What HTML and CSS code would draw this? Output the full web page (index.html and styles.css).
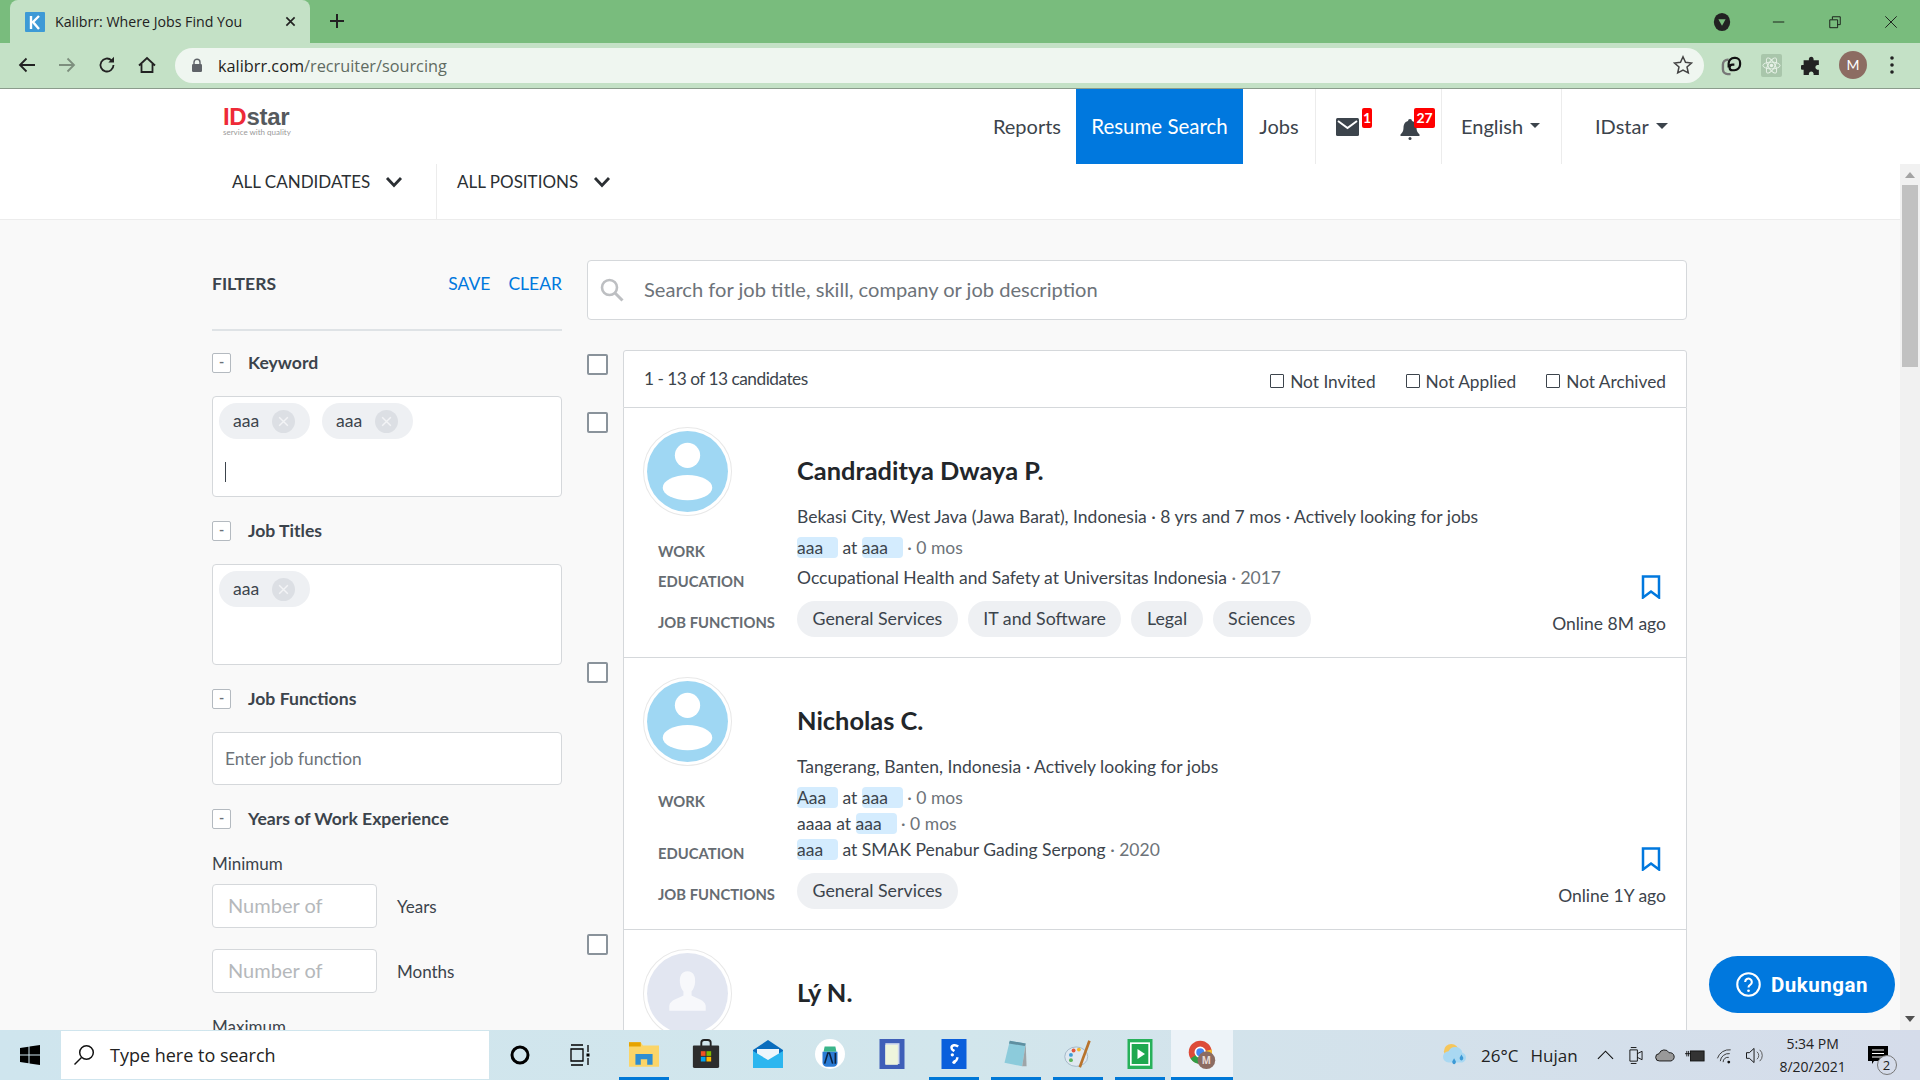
FILE: index.html
```html
<!DOCTYPE html>
<html>
<head>
<meta charset="utf-8">
<title>Kalibrr: Where Jobs Find You</title>
<link rel="stylesheet" href="styles.css">
</head>
<body>
  <!-- browser frame -->
  <div class="tabstrip">
    <div class="tab">
      <svg class="favicon" viewBox="0 0 20 20"><rect width="20" height="20" rx="1" fill="#3d9ad6"/><path d="M6 4v13M14 4l-6 6 6 7" stroke="#fff" stroke-width="2.4" fill="none"/></svg>
      <span class="tab-title">Kalibrr: Where Jobs Find You</span>
      <svg class="tab-close" viewBox="0 0 12 12"><path d="M1.5 1.5l9 9M10.5 1.5l-9 9" stroke="#222" stroke-width="1.8"/></svg>
    </div>
    <svg class="new-tab" viewBox="0 0 16 16"><path d="M8 1v14M1 8h14" stroke="#222" stroke-width="2"/></svg>
    <div class="window-controls">
      <svg class="profile-dot" viewBox="0 0 18 22"><ellipse cx="9" cy="11" rx="9" ry="10" fill="#222"/><path d="M5 8h8l-4 7z" fill="#79bc7d"/></svg>
      <svg class="win-btn" viewBox="0 0 16 16"><path d="M1 8h13" stroke="#111"/></svg>
      <svg class="win-btn" viewBox="0 0 16 16"><path d="M2 5.500h9v9H2zM5 5V2h9v9h-3" stroke="#111" fill="none"/></svg>
      <svg class="win-btn" viewBox="0 0 16 16"><path d="M1.500 1.500l13 13M14.500 1.500l-13 13" stroke="#111"/></svg>
    </div>
  </div>
  <div class="toolbar">
    <svg class="tool-icon" viewBox="0 0 20 20"><path d="M18 10H3M9.500 3.500L3 10l6.500 6.500" stroke="#222" stroke-width="1.8" fill="none"/></svg>
    <svg class="tool-icon" viewBox="0 0 20 20"><path d="M2 10h15M10.500 3.500L17 10l-6.500 6.500" stroke="#7d8f7e" stroke-width="1.8" fill="none"/></svg>
    <svg class="tool-icon" viewBox="0 0 20 20"><path d="M16.500 10a6.500 6.500 0 1 1-2-4.700" stroke="#222" stroke-width="1.8" fill="none"/><path d="M17 1.800V7.500h-5.700z" fill="#222"/></svg>
    <svg class="tool-icon" viewBox="0 0 20 20"><path d="M2 10.500L10 3l8 7.500M4.500 9v8h11V9" stroke="#222" stroke-width="1.8" fill="none"/></svg>
    <div class="omnibox">
      <svg class="lock" viewBox="0 0 12 14"><path d="M3 6V4.200a3 3 0 0 1 6 0V6" stroke="#5f6368" stroke-width="1.4" fill="none"/><rect x="1" y="6" width="10" height="8" rx="1.2" fill="#5f6368"/></svg>
      <span class="url">kalibrr.com<span class="url-path">/recruiter/sourcing</span></span>
      <svg class="star" viewBox="0 0 20 20"><path d="M10 1.800l2.500 5.500 6 .7-4.500 4 1.300 5.900L10 15l-5.300 2.900L6 12 1.500 8l6-.7z" stroke="#444" stroke-width="1.5" fill="none"/></svg>
    </div>
    <div class="extensions">
      <svg class="ext" viewBox="0 0 22 24"><path d="M8 6H7a5 5 0 0 0-5 5v5a5 5 0 0 0 5 5h3" stroke="#777" stroke-width="2.5" fill="none"/><path d="M8 14v-4a6 6 0 0 1 6-6h1a5 5 0 0 1 5 5v2a6 6 0 0 1-6 6h-2a3 3 0 0 1-3-3 3 3 0 0 1 3-3h2" stroke="#111" stroke-width="2.3" fill="none"/></svg>
      <svg class="ext" viewBox="0 0 22 24"><rect width="22" height="24" rx="2" fill="#a9c6ab"/><g stroke="#e8f2e8" fill="none"><ellipse cx="11" cy="12" rx="9" ry="3.5"/><ellipse cx="11" cy="12" rx="9" ry="3.5" transform="rotate(60 11 12)"/><ellipse cx="11" cy="12" rx="9" ry="3.5" transform="rotate(120 11 12)"/></g><circle cx="11" cy="12" r="1.8" fill="#e8f2e8"/></svg>
      <svg class="ext" viewBox="0 0 20 20"><path d="M7.500 3.500a2.300 2.300 0 0 1 4.500 0V5h5v4.500h-1.500a2.300 2.300 0 0 0 0 4.500H17v5h-5v-1.500a2.300 2.300 0 0 0-4.500 0V19h-5v-5H1a2.300 2.300 0 0 1 0-4.500h1.500V5h5z" fill="#222"/></svg>
      <div class="avatar-m">M</div>
      <svg class="dots" viewBox="0 0 6 20"><circle cx="3" cy="3" r="1.8" fill="#222"/><circle cx="3" cy="10" r="1.8" fill="#222"/><circle cx="3" cy="17" r="1.8" fill="#222"/></svg>
    </div>
  </div>

  <div class="viewport">
    <div class="page">
      <div class="header">
        <div class="nav-row">
          <div class="logo">
            <div class="logo-word"><span class="logo-id">ID</span>star</div>
            <div class="logo-sub">service with quality</div>
          </div>
          <div class="nav">
            <a class="nav-link">Reports</a>
            <a class="nav-link active">Resume Search</a>
            <a class="nav-link jobs">Jobs</a>
            <div class="nav-alerts">
              <div class="alert">
                <svg class="mail-icon" viewBox="0 0 23 18"><rect width="23" height="18" rx="1.5" fill="#3c444c"/><path d="M2 3l9.500 7L21 3" stroke="#fff" stroke-width="2" fill="none"/></svg>
                <span class="badge badge-mail">1</span>
              </div>
              <div class="alert alert-bell">
                <svg class="bell-icon" viewBox="0 0 20 22"><path d="M10 1a2 2 0 0 1 2 2c3.500 1 4.500 4 4.500 7 0 3.500 1.500 5 3 6.500V18H.5v-1.500c1.500-1.500 3-3 3-6.500 0-3 1-6 4.500-7a2 2 0 0 1 2-2z" fill="#3c444c"/><circle cx="10" cy="20.500" r="1.500" fill="#3c444c"/></svg>
                <span class="badge badge-bell">27</span>
              </div>
            </div>
            <a class="nav-link lang">English<i class="caret"></i></a>
            <a class="nav-link company">IDstar<i class="caret caret-lg"></i></a>
          </div>
        </div>
        <div class="sub-nav">
          <div class="sub-item first">ALL CANDIDATES <svg class="chev" viewBox="0 0 18 12"><path d="M2 2l7 7.500L16 2" stroke="#2b2f33" stroke-width="2.8" fill="none"/></svg></div>
          <div class="sub-item second">ALL POSITIONS <svg class="chev" viewBox="0 0 18 12"><path d="M2 2l7 7.500L16 2" stroke="#2b2f33" stroke-width="2.8" fill="none"/></svg></div>
        </div>
      </div>

      <div class="main">
        <div class="filters">
          <div class="filters-head">
            <span class="filters-title">FILTERS</span>
            <a class="filters-link save">SAVE</a>
            <a class="filters-link">CLEAR</a>
          </div>

          <div class="filter-head"><span class="toggle">-</span>Keyword</div>
          <div class="tag-box">
            <div class="tags">
              <span class="chip">aaa<svg class="chip-x" viewBox="0 0 24 24"><circle cx="12" cy="12" r="12" fill="#dcdfe4"/><path d="M7.500 7.500l9 9M16.500 7.500l-9 9" stroke="#f3f4f6" stroke-width="1.5"/></svg></span>
              <span class="chip">aaa<svg class="chip-x" viewBox="0 0 24 24"><circle cx="12" cy="12" r="12" fill="#dcdfe4"/><path d="M7.500 7.500l9 9M16.500 7.500l-9 9" stroke="#f3f4f6" stroke-width="1.5"/></svg></span>
            </div>
            <div class="text-caret"></div>
          </div>

          <div class="filter-head"><span class="toggle">-</span>Job Titles</div>
          <div class="tag-box">
            <div class="tags">
              <span class="chip">aaa<svg class="chip-x" viewBox="0 0 24 24"><circle cx="12" cy="12" r="12" fill="#dcdfe4"/><path d="M7.500 7.500l9 9M16.500 7.500l-9 9" stroke="#f3f4f6" stroke-width="1.5"/></svg></span>
            </div>
          </div>

          <div class="filter-head"><span class="toggle">-</span>Job Functions</div>
          <input class="text-input" type="text" placeholder="Enter job function">

          <div class="filter-head head-years"><span class="toggle">-</span>Years of Work Experience</div>
          <div class="range-label">Minimum</div>
          <div class="range-row"><input class="num-input" type="text" placeholder="Number of"><span>Years</span></div>
          <div class="range-row"><input class="num-input" type="text" placeholder="Number of"><span>Months</span></div>
          <div class="range-label label-max">Maximum</div>
        </div>

        <div class="results">
          <div class="search-box">
            <svg class="search-icon" viewBox="0 0 24 24"><circle cx="9.500" cy="9.500" r="7.500" stroke="#bdbfc2" stroke-width="2.6" fill="none"/><path d="M15 15l7.500 7.500" stroke="#bdbfc2" stroke-width="3"/></svg>
            <input class="search-input" type="text" placeholder="Search for job title, skill, company or job description">
          </div>

          <div class="row">
            <div class="row-check"><span class="check"></span></div>
            <div class="list-head">
              <span class="count">1 - 13 of 13 candidates</span>
              <label class="flag"><span class="flag-box"></span>Not Invited</label>
              <label class="flag"><span class="flag-box"></span>Not Applied</label>
              <label class="flag"><span class="flag-box"></span>Not Archived</label>
            </div>
          </div>

          <div class="row">
            <div class="row-check"><span class="check"></span></div>
            <div class="card">
              <div class="card-top">
                <svg class="avatar" viewBox="0 0 88 88"><circle cx="44" cy="44" r="43.5" fill="#fff" stroke="#e8e8e8"/><circle cx="44" cy="44" r="40" fill="#9fd7f3"/><circle cx="44" cy="28" r="12.5" fill="#fff"/><ellipse cx="44" cy="60" rx="24.5" ry="12.5" fill="#fff"/></svg>
                <div class="card-title">
                  <div class="name">Candraditya Dwaya P.</div>
                  <div class="location">Bekasi City, West Java (Jawa Barat), Indonesia · 8 yrs and 7 mos · Actively looking for jobs</div>
                </div>
              </div>
              <div class="card-body">
                <div class="info">
                  <div class="info-row single">
                    <div class="info-label">WORK</div>
                    <div class="info-value"><mark>aaa</mark> at <mark>aaa</mark> <span class="muted">· 0 mos</span></div>
                  </div>
                  <div class="info-row">
                    <div class="info-label">EDUCATION</div>
                    <div class="info-value">Occupational Health and Safety at Universitas Indonesia <span class="muted">· 2017</span></div>
                  </div>
                  <div class="info-row pills-row">
                    <div class="info-label">JOB FUNCTIONS</div>
                    <div class="pills"><span class="pill">General Services</span><span class="pill">IT and Software</span><span class="pill">Legal</span><span class="pill">Sciences</span></div>
                  </div>
                </div>
                <div class="card-aside">
                  <svg class="bookmark" viewBox="0 0 20 24"><path d="M2 1.500h16v21l-8-6-8 6z" stroke="#0078de" stroke-width="2.5" fill="none"/></svg>
                  <div class="online">Online 8M ago</div>
                </div>
              </div>
            </div>
          </div>

          <div class="row">
            <div class="row-check"><span class="check"></span></div>
            <div class="card">
              <div class="card-top">
                <svg class="avatar" viewBox="0 0 88 88"><circle cx="44" cy="44" r="43.5" fill="#fff" stroke="#e8e8e8"/><circle cx="44" cy="44" r="40" fill="#9fd7f3"/><circle cx="44" cy="28" r="12.5" fill="#fff"/><ellipse cx="44" cy="60" rx="24.5" ry="12.5" fill="#fff"/></svg>
                <div class="card-title">
                  <div class="name">Nicholas C.</div>
                  <div class="location">Tangerang, Banten, Indonesia · Actively looking for jobs</div>
                </div>
              </div>
              <div class="card-body">
                <div class="info">
                  <div class="info-row">
                    <div class="info-label">WORK</div>
                    <div class="info-value"><mark>Aaa</mark> at <mark>aaa</mark> <span class="muted">· 0 mos</span><br>aaaa at <mark>aaa</mark> <span class="muted">· 0 mos</span></div>
                  </div>
                  <div class="info-row">
                    <div class="info-label">EDUCATION</div>
                    <div class="info-value"><mark>aaa</mark> at SMAK Penabur Gading Serpong <span class="muted">· 2020</span></div>
                  </div>
                  <div class="info-row pills-row">
                    <div class="info-label">JOB FUNCTIONS</div>
                    <div class="pills"><span class="pill">General Services</span></div>
                  </div>
                </div>
                <div class="card-aside">
                  <svg class="bookmark" viewBox="0 0 20 24"><path d="M2 1.500h16v21l-8-6-8 6z" stroke="#0078de" stroke-width="2.5" fill="none"/></svg>
                  <div class="online">Online 1Y ago</div>
                </div>
              </div>
            </div>
          </div>

          <div class="row">
            <div class="row-check"><span class="check"></span></div>
            <div class="card">
              <div class="card-top">
                <svg class="avatar" viewBox="0 0 88 88"><circle cx="44" cy="44" r="43.5" fill="#fff" stroke="#e8e8e8"/><circle cx="44" cy="44" r="40" fill="#e2e6f1"/><path d="M44 22c6 0 8 5 7.500 11-.3 4-2 7-3.500 9v4c5 3 13 4 14 10v5H26v-5c1-6 9-7 14-10v-4c-1.500-2-3.200-5-3.500-9C36 27 38 22 44 22z" fill="#f7f8fb"/></svg>
                <div class="card-title">
                  <div class="name">Lý N.</div>
                </div>
              </div>
            </div>
          </div>
        </div>
      </div>

      <div class="support">
        <svg class="support-icon" viewBox="0 0 24 24"><circle cx="12" cy="12" r="10.8" stroke="#fff" stroke-width="2" fill="none"/><path d="M8.800 9.500a3.200 3.200 0 1 1 4.800 2.800c-1 .6-1.600 1.200-1.600 2.500" stroke="#fff" stroke-width="2" fill="none"/><circle cx="12" cy="18" r="1.3" fill="#fff"/></svg>
        Dukungan
      </div>
    </div>

    <div class="scrollbar">
      <i class="arrow-up"></i>
      <div class="thumb"></div>
      <i class="arrow-down"></i>
    </div>
  </div>

  <!-- windows taskbar -->
  <div class="taskbar">
    <div class="start">
      <svg class="win-logo" viewBox="0 0 20 20"><path d="M0 3l8.500-1.200v7.700H0zM9.500 1.600L20 0v9.500H9.500zM0 10.500h8.500v7.700L0 17zM9.500 10.500H20V20L9.500 18.400z" fill="#000"/></svg>
    </div>
    <div class="task-search">
      <svg class="task-glass" viewBox="0 0 22 22"><circle cx="13.500" cy="8.500" r="6.800" stroke="#111" stroke-width="1.5" fill="none"/><path d="M8.500 13.500L1.500 20.500" stroke="#111" stroke-width="1.5"/></svg>
      Type here to search
    </div>
    <div class="task-sys">
      <svg class="cortana" viewBox="0 0 20 20"><circle cx="10" cy="10" r="8" stroke="#000" stroke-width="3" fill="none"/></svg>
      <svg class="taskview" viewBox="0 0 20 22"><path d="M1 1h12M1 21h12M1 5h12v12H1zM18 1v7M18 14v7" stroke="#000" stroke-width="1.3" fill="none"/><rect x="16.500" y="9.500" width="3" height="3" fill="#000"/></svg>
    </div>
    <div class="task-apps">
      <div class="app on">
        <svg class="app-icon" viewBox="0 0 28 28"><path d="M0 3h11l2 3h15v20H0z" fill="#fbd568"/><path d="M0 3h11v4H0z" fill="#e6a300"/><path d="M6 24V14h16v10h-5v-5h-6v5z" fill="#2f8ed1"/></svg>
      </div>
      <div class="app">
        <svg class="app-icon" viewBox="0 0 28 32"><path d="M9 8V4a3 3 0 0 1 3-3h4a3 3 0 0 1 3 3v4" stroke="#222" stroke-width="2" fill="none"/><path d="M1 7h26a1 1 0 0 1 1 1v21a2 2 0 0 1-2 2H2a2 2 0 0 1-2-2V8a1 1 0 0 1 1-1z" fill="#2d2d2d"/><rect x="8.500" y="13" width="5" height="5" fill="#f25022"/><rect x="14.500" y="13" width="5" height="5" fill="#7fba00"/><rect x="8.500" y="19" width="5" height="5" fill="#00a4ef"/><rect x="14.500" y="19" width="5" height="5" fill="#ffb900"/></svg>
      </div>
      <div class="app">
        <svg class="app-icon" viewBox="0 0 30 28"><path d="M0 10L15 0l15 10v18H0z" fill="#0a6dbd"/><path d="M4 9h22v8l-11 6-11-6z" fill="#eef6fb"/><path d="M0 11l15 9 15-9v17H0z" fill="#2cb6ef"/></svg>
      </div>
      <div class="app">
        <svg class="app-icon" viewBox="0 0 28 28"><circle cx="14" cy="14" r="14" fill="#fff"/><path d="M9 7h10l1 5H8z" fill="#3ab58a"/><path d="M7 12h14v10a4 4 0 0 1-4 4h-6a4 4 0 0 1-4-4z" fill="#2a7bd4"/><path d="M9 23l3-10h1.500l3 10M19 13v10" stroke="#0c2340" stroke-width="1.5" fill="none"/></svg>
      </div>
      <div class="app">
        <svg class="app-icon" viewBox="0 0 30 36"><rect width="30" height="36" fill="#3f5fb8"/><rect x="7" y="5" width="17" height="25" fill="#cfd9ee"/><rect x="7" y="7" width="15" height="24" fill="#eef5dc"/></svg>
      </div>
      <div class="app on">
        <svg class="app-icon" viewBox="0 0 30 36"><rect width="30" height="36" fill="#0a5fdc"/><path d="M20 9c-3-2.500-8-2-8 1.500 0 2.500 2 3 3.500 4" stroke="#fff" stroke-width="3" fill="none"/><path d="M19 22c0 3-2 5-4.500 5" stroke="#fff" stroke-width="3" fill="none"/><circle cx="15" cy="28" r="2" fill="#fff"/><circle cx="13" cy="19" r="2" fill="#fff"/></svg>
      </div>
      <div class="app on">
        <svg class="app-icon" viewBox="0 0 30 34"><path d="M8 2l18 3-4 26L2 27z" fill="#8ccbdb"/><path d="M26 5l1 26-5 0z" fill="#9ea5a8"/><path d="M8 2l18 3-1 3L7 5z" fill="#5f8fa0"/></svg>
      </div>
      <div class="app on">
        <svg class="app-icon" viewBox="0 0 32 34"><ellipse cx="14" cy="20" rx="13" ry="11" fill="#dfe8f0" stroke="#9db3c4"/><circle cx="8" cy="18" r="2.2" fill="#3d9ad6"/><circle cx="11" cy="13" r="2.2" fill="#e0563d"/><circle cx="17" cy="12" r="2.2" fill="#f1b82d"/><circle cx="8" cy="24" r="2.2" fill="#5db55b"/><path d="M29 2l-11 30" stroke="#b8732c" stroke-width="3"/></svg>
      </div>
      <div class="app on">
        <svg class="app-icon" viewBox="0 0 30 36"><rect width="30" height="36" fill="#27b15a"/><rect x="3" y="4" width="24" height="28" fill="#fff"/><rect x="5" y="6" width="20" height="24" fill="#1fa84f"/><path d="M12 12l9 6-9 6z" fill="#fff"/></svg>
      </div>
      <div class="app on active">
        <svg class="app-icon chrome-icon" viewBox="0 0 32 34"><circle cx="14" cy="15" r="13" fill="#dd4b39"/><path d="M14 15L3 22a13 13 0 0 0 11 6z" fill="#2f9e44"/><path d="M14 15l13-3a13 13 0 0 1-8 15z" fill="#f6c026"/><circle cx="14" cy="15" r="5.500" fill="#4285f4" stroke="#fff" stroke-width="2"/><circle cx="21" cy="24" r="10" fill="#8c6c62"/><text x="21" y="28" class="chrome-m">M</text></svg>
      </div>
    </div>
    <div class="tray">
      <svg class="weather" viewBox="0 0 28 26"><circle cx="10" cy="9" r="8" fill="#f6c65b"/><path d="M7 21a6 6 0 0 1 0-12 8 8 0 0 1 15 1.500A5.500 5.500 0 0 1 22 21z" fill="#a9d8f2"/><path d="M11 20c0 4 4 4 4 0l-2-3.500zM19 16c0 4 4 4 4 0l-2-3.500z" fill="#3d9ad6"/></svg>
      <span class="temp">26°C</span>
      <span class="rain">Hujan</span>
      <svg class="tray-chev" viewBox="0 0 18 10"><path d="M1 9l8-8 8 8" stroke="#111" stroke-width="1.2" fill="none"/></svg>
      <svg class="tray-icon" viewBox="0 0 16 20"><path d="M3 1.500h6M3 18.500h6M2 4h8v12H2zM10 8l5-2.500v9L10 12" stroke="#111" fill="none"/></svg>
      <svg class="tray-icon wide" viewBox="0 0 22 14"><path d="M5 13a4 4 0 0 1-.5-8 6 6 0 0 1 11-1 4.500 4.500 0 0 1 2 9z" fill="#999" stroke="#111"/></svg>
      <svg class="tray-icon wide" viewBox="0 0 22 14"><rect x="6" y="2" width="15" height="11" stroke="#111" fill="#333"/><path d="M0 5h6M2 2v6M4 2v6" stroke="#111"/></svg>
      <svg class="tray-icon wide" viewBox="0 0 18 18"><path d="M1 12a13 13 0 0 1 14-9M4 15a9 9 0 0 1 10-8M7 16a5 5 0 0 1 6-5" stroke="#333" fill="none"/><circle cx="13" cy="16" r="1.500" fill="#111"/></svg>
      <svg class="tray-icon wide" viewBox="0 0 20 18"><path d="M1 6h3l5-4.500v15L4 12H1z" stroke="#111" fill="none"/><path d="M12 5a5 5 0 0 1 0 8M15 3a8 8 0 0 1 0 12" stroke="#555" fill="none"/></svg>
      <div class="clock"><div>5:34 PM</div><div>8/20/2021</div></div>
      <div class="notify">
        <svg class="notify-icon" viewBox="0 0 20 18"><path d="M0 0h20v15H6l-2 3v-3H0z" fill="#000"/><path d="M4 4h12M4 7.500h12M4 11h12" stroke="#fff"/></svg>
        <span class="notify-count">2</span>
      </div>
    </div>
  </div>
</body>
</html>
```
FILE: styles.css
```css
* {
  box-sizing: border-box;
}

html,
body {
  margin: 0;
  height: 100%;
}

body {
  display: flex;
  flex-direction: column;
  height: 1080px;
  overflow: hidden;
  font-family: Lato, "Liberation Sans", sans-serif;
  color: #3c444c;
  background-color: #fff;
}

/* browser frame */
.tabstrip {
  display: flex;
  align-items: flex-start;
  height: 43px;
  padding-left: 10px;
  background-color: #79bc7d;
  flex-shrink: 0;
}

.tab {
  display: flex;
  align-items: center;
  width: 300px;
  height: 43px;
  padding-left: 15px;
  background-color: #c4e1c6;
  border-radius: 8px 8px 0 0;
}

.favicon {
  width: 20px;
  height: 20px;
  margin-right: 10px;
}

.tab-title {
  flex: 1;
  font-family: "Open Sans", sans-serif;
  font-size: 14.2px;
  color: #222;
}

.tab-close {
  width: 11px;
  height: 11px;
  margin-right: 14px;
}

.new-tab {
  width: 16px;
  height: 16px;
  margin: 13px 0 0 19px;
}

.window-controls {
  display: flex;
  align-items: center;
  margin-left: auto;
  height: 43px;
}

.profile-dot {
  width: 18px;
  height: 20px;
  margin-right: 41px;
}

.win-btn {
  width: 14px;
  height: 14px;
  margin-right: 42px;
}

.win-btn:last-child {
  margin-right: 22px;
}

.toolbar {
  display: flex;
  align-items: center;
  height: 46px;
  padding: 0 0 1px 17px;
  background-color: #c4e1c6;
  border-bottom: 1px solid #8b9c8c;
  flex-shrink: 0;
}

.tool-icon {
  width: 20px;
  height: 20px;
  margin-right: 20px;
  flex-shrink: 0;
}

.omnibox {
  display: flex;
  align-items: center;
  width: 1529px;
  height: 35px;
  margin-left: -2px;
  padding: 0 11px 0 16px;
  background-color: #eff6f0;
  border-radius: 18px;
  flex-shrink: 0;
}

.lock {
  width: 12px;
  height: 14px;
  margin-right: 15px;
}

.url {
  flex: 1;
  padding-top: 2px;
  font-family: "Open Sans", sans-serif;
  font-size: 16.3px;
  color: #1f2320;
}

.url-path {
  color: #5f6b62;
}

.star {
  width: 20px;
  height: 20px;
}

.extensions {
  display: flex;
  align-items: center;
  margin-left: 17px;
}

.ext {
  width: 21px;
  height: 23px;
  margin-right: 19px;
  flex-shrink: 0;
}

.avatar-m {
  width: 28px;
  height: 28px;
  margin-left: -2px;
  border-radius: 50%;
  background-color: #8c6c62;
  color: #fff;
  font-size: 14px;
  line-height: 28px;
  text-align: center;
  flex-shrink: 0;
}

.dots {
  width: 6px;
  height: 20px;
  margin-left: 22px;
  flex-shrink: 0;
}

/* page */
.viewport {
  display: flex;
  flex: 1;
  min-height: 0;
}

.page {
  position: relative;
  flex: 1;
  overflow: hidden;
  background-color: #f9f9f9;
}

.header {
  height: 131px;
  background-color: #fff;
  border-bottom: 1px solid #ececec;
}

.nav-row {
  display: flex;
  height: 75px;
}

.logo {
  margin: 17px 0 0 223px;
  color: #55595d;
}

.logo-word {
  font-family: "Liberation Sans", sans-serif;
  font-size: 24px;
  font-weight: bold;
  line-height: 22px;
  letter-spacing: -0.3px;
}

.logo-id {
  color: #ee2a37;
}

.logo-sub {
  font-size: 8px;
  line-height: 8px;
  color: #9a9a9a;
}

.nav {
  display: flex;
  margin-left: auto;
  height: 75px;
  font-size: 20px;
}

.nav-link {
  display: flex;
  align-items: center;
  padding: 0 15px 2px;
  color: #3c444c;
}

.nav-link.active {
  justify-content: center;
  width: 167px;
  padding: 0 0 2px;
  background-color: #0078de;
  color: #fff;
  font-size: 20.5px;
}

.nav-link.jobs {
  justify-content: center;
  width: 72px;
  padding: 0 0 2px;
}

.nav-alerts {
  display: flex;
  width: 127px;
  margin-left: 0;
  border-left: 1px solid #ececec;
  border-right: 1px solid #ececec;
}

.alert {
  position: relative;
  margin: 29px 0 0 20px;
}

.alert-bell {
  margin: 29px 0 0 41px;
}

.mail-icon {
  display: block;
  width: 23px;
  height: 18px;
}

.bell-icon {
  display: block;
  width: 20px;
  height: 22px;
}

.badge {
  position: absolute;
  top: -10px;
  height: 20px;
  background-color: #f00;
  color: #fff;
  border-radius: 2px;
  font-size: 14px;
  font-weight: bold;
  line-height: 20px;
  text-align: center;
}

.badge-mail {
  left: 26px;
  width: 10px;
}

.badge-bell {
  left: 14px;
  width: 21px;
}

.nav-link.lang {
  width: 120px;
  padding: 0 0 2px 19px;
  border-right: 1px solid #ececec;
}

.nav-link.company {
  width: 132px;
  padding: 0 0 2px 33px;
  margin-right: 206px;
}

.caret {
  width: 0;
  height: 0;
  margin-left: 7px;
  border-top: 5px solid #3c444c;
  border-left: 5px solid transparent;
  border-right: 5px solid transparent;
}

.caret-lg {
  border-top-width: 6px;
  border-left-width: 6px;
  border-right-width: 6px;
}

.sub-nav {
  display: flex;
  height: 55px;
  font-size: 17px;
  color: #2b2f33;
}

.sub-item {
  display: flex;
  align-items: center;
  height: 55px;
  padding-bottom: 20px;
}

.sub-item.first {
  width: 437px;
  padding-left: 232px;
  border-right: 1px solid #ececec;
}

.sub-item.second {
  padding-left: 20px;
}

.chev {
  width: 18px;
  height: 12px;
  margin-left: 15px;
}

.main {
  display: flex;
  padding: 40px 0 0 212px;
}

/* filters */
.filters {
  width: 350px;
  margin-right: 25px;
  flex-shrink: 0;
}

.filters-head {
  display: flex;
  height: 71px;
  margin-bottom: -2px;
  padding-top: 13px;
  font-size: 17.5px;
  border-bottom: 2px solid #dfe3e6;
}

.filters-title {
  font-weight: bold;
  margin-right: auto;
}

.filters-link {
  color: #0078de;
}

.filters-link.save {
  margin-right: 18px;
}

.filter-head {
  display: flex;
  align-items: center;
  height: 21px;
  margin: 24px 0 22px;
  padding-bottom: 2px;
  font-size: 17.6px;
  font-weight: bold;
}

.toggle {
  align-self: flex-start;
  width: 19px;
  height: 20px;
  margin-right: 17px;
  background-color: #fff;
  border: 1px solid #b4bac0;
  border-radius: 2px;
  color: #6a7178;
  font-size: 14px;
  line-height: 16px;
  text-align: center;
}

.tag-box {
  height: 101px;
  padding: 6px;
  background-color: #fff;
  border: 1px solid #d5d8db;
  border-radius: 4px;
}

.tags {
  display: flex;
  gap: 12px;
}

.chip {
  display: flex;
  align-items: center;
  width: 91px;
  height: 36px;
  padding: 0 0 2px 14px;
  background-color: #eef0f3;
  border-radius: 18px;
  font-size: 17.6px;
}

.chip-x {
  width: 23px;
  height: 23px;
  margin: 2px 0 0 13px;
}

.text-caret {
  width: 1px;
  height: 20px;
  margin: 23px 0 0 6px;
  background-color: #3c444c;
}

.text-input {
  display: block;
  width: 100%;
  height: 53px;
  padding: 0 12px;
  background-color: #fff;
  border: 1px solid #d5d8db;
  border-radius: 4px;
  font-family: inherit;
  font-size: 17.3px;
}

.text-input::placeholder {
  color: #6d7379;
}

.head-years {
  margin: 24px 0 0;
}

.range-label {
  margin-top: 23px;
  font-size: 17px;
  line-height: 21px;
}

.label-max {
  margin-top: 23px;
}

.range-row {
  display: flex;
  align-items: center;
  gap: 20px;
  margin-top: 10px;
  font-size: 17px;
}

.range-row + .range-row {
  margin-top: 21px;
}

.num-input {
  width: 165px;
  height: 44px;
  padding: 0 15px 2px;
  background-color: #fff;
  border: 1px solid #d5d8db;
  border-radius: 4px;
  font-family: inherit;
  font-size: 20px;
}

.num-input::placeholder {
  color: #b5b8bb;
}

/* results */
.results {
  width: 1100px;
}

.search-box {
  display: flex;
  align-items: center;
  height: 60px;
  margin-bottom: 30px;
  padding: 0 0 0 12px;
  background-color: #fff;
  border: 1px solid #d5d8db;
  border-radius: 4px;
}

.search-icon {
  width: 24px;
  height: 24px;
  margin-right: 20px;
}

.search-input {
  flex: 1;
  padding: 0 2px 3px 0;
  border: none;
  outline: none;
  font-family: inherit;
  font-size: 20.1px;
}

.search-input::placeholder {
  color: #6d7379;
}

.row {
  display: flex;
}

.row-check {
  width: 36px;
  padding-top: 4px;
  flex-shrink: 0;
}

.check {
  display: block;
  width: 21px;
  height: 21px;
  background-color: #fff;
  border: 2px solid #8a939b;
  border-radius: 2px;
}

.list-head {
  display: flex;
  align-items: center;
  flex: 1;
  height: 58px;
  padding: 0 20px 2px;
  background-color: #fff;
  border: 1px solid #d5d8db;
  border-radius: 3px 3px 0 0;
  font-size: 17.3px;
}

.count {
  margin-right: auto;
  letter-spacing: -0.5px;
}

.flag {
  display: flex;
  align-items: center;
  margin-left: 30px;
  padding-top: 6px;
}

.flag-box {
  width: 14px;
  height: 14px;
  margin-right: 6px;
  border: 1.5px solid #3c444c;
  border-radius: 1px;
}

.card {
  flex: 1;
  padding: 19px 20px 0 19px;
  background-color: #fff;
  border: 1px solid #d5d8db;
  border-top: none;
  font-size: 17.5px;
}

.card-top {
  display: flex;
  height: 105px;
}

.avatar {
  width: 89px;
  height: 89px;
  margin-right: 65px;
  flex-shrink: 0;
}

.card-title {
  padding-top: 28px;
}

.name {
  font-size: 25.4px;
  font-weight: bold;
  line-height: 30px;
  color: #22262a;
}

.location {
  margin-top: 17px;
  line-height: 30px;
}

.card-body {
  display: flex;
  padding: 3px 0 20px;
}

.info {
  flex: 1;
}

.info-row {
  display: flex;
  line-height: 26px;
}

.info-row.single {
  margin-bottom: 4px;
}

.info-label {
  width: 154px;
  height: 26px;
  padding: 3px 0 0 15px;
  font-size: 14.8px;
  font-weight: bold;
  color: #666c72;
  flex-shrink: 0;
}

.muted {
  color: #6d7379;
}

mark {
  display: inline-block;
  min-width: 41px;
  height: 21px;
  margin-top: 2px;
  padding-right: 8px;
  background-color: #d4ecfe;
  border-radius: 4px;
  color: inherit;
  line-height: 21px;
  vertical-align: top;
}

.pills-row {
  align-items: center;
  margin-top: 10px;
}

.pills {
  display: flex;
  gap: 10px;
}

.pill {
  height: 36px;
  padding: 0 15.5px;
  background-color: #eef0f3;
  border-radius: 18px;
  font-size: 17.8px;
  line-height: 35px;
}

.card-aside {
  display: flex;
  flex-direction: column;
  align-items: flex-end;
  justify-content: flex-end;
}

.bookmark {
  width: 20px;
  height: 24px;
  margin: 0 5px 12px 0;
}

.online {
  line-height: 26px;
}

.support {
  position: absolute;
  right: 5px;
  bottom: 17px;
  display: flex;
  align-items: center;
  width: 186px;
  height: 57px;
  padding-left: 27px;
  background-color: #0078de;
  border-radius: 29px;
  color: #fff;
  font-family: Roboto, sans-serif;
  font-size: 20.5px;
  font-weight: bold;
  letter-spacing: 0.5px;
}

.support-icon {
  width: 25px;
  height: 25px;
  margin-right: 10px;
}

/* scrollbar */
.scrollbar {
  display: flex;
  flex-direction: column;
  align-items: center;
  width: 20px;
  margin-top: 75px;
  padding-top: 8px;
  background-color: #f1f1f1;
}

.arrow-up {
  border-bottom: 6px solid #a3a3a3;
  border-left: 5px solid transparent;
  border-right: 5px solid transparent;
}

.thumb {
  width: 16px;
  height: 182px;
  margin-top: 7px;
  background-color: #c1c1c1;
}

.arrow-down {
  margin-top: auto;
  margin-bottom: 8px;
  border-top: 6px solid #505050;
  border-left: 5px solid transparent;
  border-right: 5px solid transparent;
}

/* taskbar */
.taskbar {
  display: flex;
  align-items: stretch;
  height: 50px;
  background: linear-gradient(90deg, #cfe5ee 0%, #d2e6ec 50%, #d5dcea 100%);
  flex-shrink: 0;
}

.start {
  display: flex;
  align-items: center;
  width: 61px;
  padding-left: 20px;
  flex-shrink: 0;
}

.win-logo {
  width: 20px;
  height: 20px;
}

.task-search {
  display: flex;
  align-items: center;
  width: 428px;
  margin: 1px 0;
  padding-left: 12px;
  background-color: #fff;
  font-family: "Open Sans", sans-serif;
  font-size: 18px;
  color: #222;
  flex-shrink: 0;
}

.task-glass {
  width: 22px;
  height: 22px;
  margin-right: 15px;
}

.task-sys {
  display: flex;
  align-items: center;
  width: 124px;
  padding-left: 21px;
  flex-shrink: 0;
}

.cortana {
  width: 20px;
  height: 20px;
  margin-right: 40px;
}

.taskview {
  width: 20px;
  height: 22px;
}

.task-apps {
  display: flex;
  flex-shrink: 0;
}

.app {
  display: flex;
  align-items: center;
  justify-content: center;
  width: 50px;
  margin: 0 6px;
  border-bottom: 3px solid transparent;
}

.app.on {
  border-bottom-color: #0078d7;
}

.app.active {
  width: 62px;
  margin: 0;
  background-color: #edf3f8;
}

.app-icon {
  height: 30px;
  width: 30px;
}

.chrome-m {
  font-family: "Open Sans", sans-serif;
  font-size: 11px;
  font-weight: bold;
  fill: #e8dcd8;
  text-anchor: middle;
}

.tray {
  display: flex;
  align-items: center;
  margin-left: 209px;
  font-family: "Open Sans", sans-serif;
  font-size: 17px;
  color: #222;
  flex-shrink: 0;
}

.weather {
  width: 26px;
  height: 24px;
  margin-right: 13px;
}

.temp {
  margin-right: 12px;
}

.rain {
  margin-right: 19px;
}

.tray-chev {
  width: 17px;
  height: 10px;
  margin-right: 14px;
}

.tray-icon {
  width: 15px;
  height: 19px;
  margin-right: 12px;
}

.tray-icon.wide {
  width: 20px;
  height: 17px;
  margin-right: 10px;
}

.clock {
  width: 70px;
  margin-left: 3px;
  font-size: 14px;
  line-height: 23px;
  text-align: center;
}

.notify {
  position: relative;
  margin-left: 20px;
}

.notify-icon {
  display: block;
  width: 20px;
  height: 18px;
}

.notify-count {
  position: absolute;
  left: 9px;
  top: 9px;
  width: 20px;
  height: 20px;
  background-color: #d5dcea;
  border: 1px solid #777;
  border-radius: 50%;
  font-size: 13px;
  line-height: 18px;
  text-align: center;
}
```
